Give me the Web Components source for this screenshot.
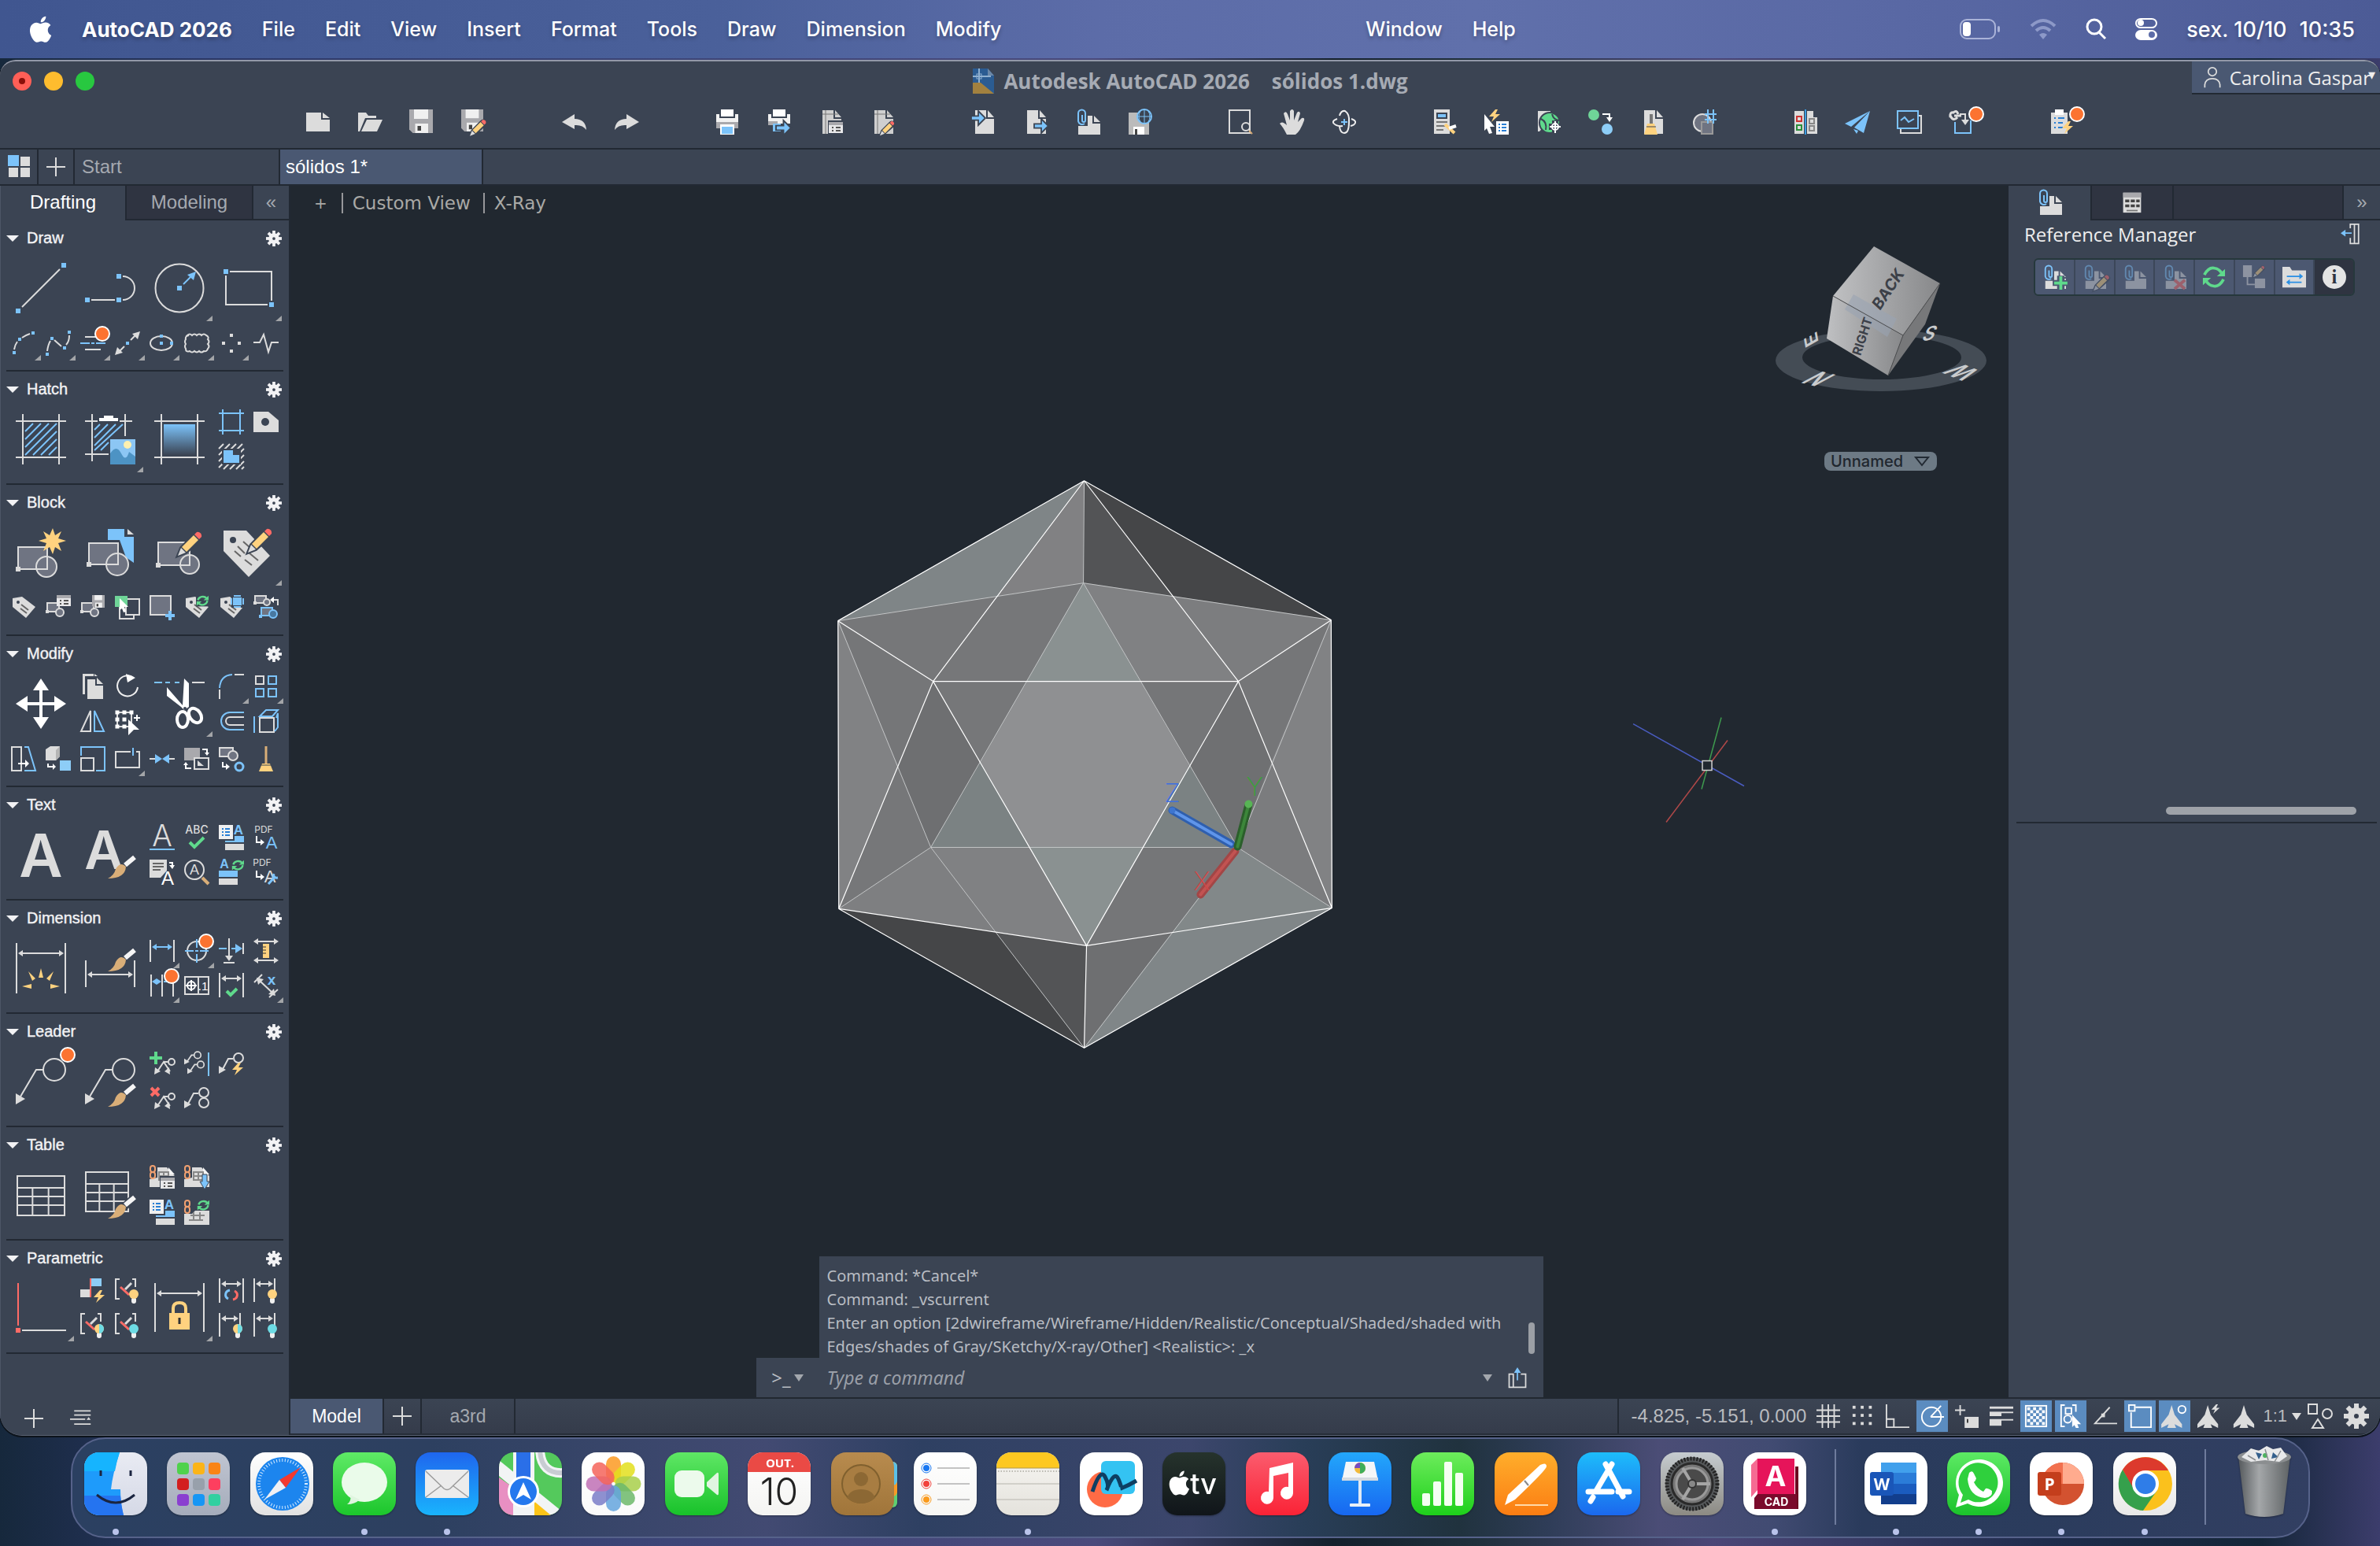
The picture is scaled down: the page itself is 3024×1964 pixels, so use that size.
<!DOCTYPE html>
<html lang="pt">
<head>
<meta charset="utf-8">
<title>Autodesk AutoCAD 2026</title>
<style>
html,body{margin:0;height:100%}
body{
  --panel:#3b4453;--line:#222933;--canvas:#212830;--tab:#2f3441;--active:#4a5872;--ink:#f2f2f4;--dim:#a5a9b0;
  display:flex;flex-direction:column;overflow:hidden;color:var(--ink);
  font-family:"Liberation Sans",Arial,sans-serif;
  background:linear-gradient(90deg,#16283c 0,#2b3766 9%,#3d4577 28%,#4a4a7c 46%,#14202c 56%,#20303c 62%,#4b4677 72%,#1f2c4c 86%,#142638 95%,#3c3d6c 100%)}
cad-window{flex:1;min-height:0;margin:2px 0}
</style>
</head>
<body>
<mac-menubar></mac-menubar>
<cad-window>
  <cad-titlebar slot="head"></cad-titlebar>
  <cad-toolbar slot="head"></cad-toolbar>
  <cad-doctabs slot="head"></cad-doctabs>
  <cad-tools slot="left"></cad-tools>
  <cad-viewport slot="center"></cad-viewport>
  <cad-references slot="right"></cad-references>
  <cad-status slot="foot"></cad-status>
</cad-window>
<mac-dock></mac-dock>
<script>
const W='#dcdcdc',B='#7cc3fa',Y='#ffd27f',G='#5fd98c',R='#ff6b66',F='#6f7482',P='#3b4453',T='#d9ae78',N='none';
const s=(d,c=W,w=2,x='')=>`<path d="${d}" fill="none" stroke="${c}" stroke-width="${w}" ${x}/>`;
const f=(d,c=W,x='')=>`<path d="${d}" fill="${c}" ${x}/>`;
const q=(x,y,c=B,n=6)=>`<rect x="${x-n/2}" y="${y-n/2}" width="${n}" height="${n}" fill="${c}"/>`;
const o=(x,y,r,fl=N,st=W,w=2)=>`<circle cx="${x}" cy="${y}" r="${r}" fill="${fl}" stroke="${st}" stroke-width="${w}"/>`;
const r=(x,y,w,h,fl=W,st=N,sw=2,rx=0)=>`<rect x="${x}" y="${y}" width="${w}" height="${h}" fill="${fl}" stroke="${st}" stroke-width="${sw}" rx="${rx}"/>`;
const g=(t,i)=>`<g transform="${t}">${i}</g>`;
const t=(x,y,n,str,c=W,x2='')=>`<text x="${x}" y="${y}" font-size="${n}" fill="${c}" text-anchor="middle" ${x2}>${str}</text>`;
const pencil=f('M0 32L4 22L20 6L22 4A5 5 0 0 1 29 11L10 28Z',P,`stroke="${P}" stroke-width="4"`)+f('M0 32L4 22L10 28Z')+f('M5 21L20 6L26 12L11 27Z',Y)+f('M21 5L24 2A5 5 0 0 1 30 8L27 11Z',R);
const brush=s('M22 14L34 3',P,10)+f('M0 30Q8 26 10 18Q16 8 23 15Q22 30 0 30Z',T)+s('M22 13L34 3','#f5f5f5',6);
const page=(c=W)=>f('M5 1H19V12H29V31H5Z',c)+f('M21 1L29 10H21Z',c);
const clip=s('M9 7V14A2 2 0 0 0 13 14V5A4 4 0 0 0 4 5V15A5 5 0 0 0 12 18',B,2);
const refpage=f('M4 21H16V8H22V18H32V32H4Z')+f('M24 8L32 16H24Z');
const lbl=(n=0)=>r(0,0,18,14,'#e8e8ea')+r(0,0,18,4,'#a9a9ad')+s('M4 7H6M9 7H15M4 11H6M9 11H15','#555',2);
const bolt=(c=Y)=>f('M8 0L0 9H6L3 16L14 6H8L11 0Z',c);
const sync=s('M3 8A8 7 0 0 1 17 5M18 9A8 7 0 0 1 4 13',G,3)+f('M20 1V8H12Z',G)+f('M1 17V10H9Z',G);
const floppy=f('M0 0H20V20H3L0 17Z','#a9a9ad')+r(4,0,12,8,'#f0f0f0')+r(5,12,11,8,'#f0f0f0')+r(7,14,3,4,'#444');
const dimh=(x1,x2,y,c=W)=>s(`M${x1+4} ${y}H${x2-4}`,c)+f(`M${x1} ${y}l6 -4v8zM${x2} ${y}l-6 -4v8z`,c);
const blk=(x,y)=>g(`translate(${x} ${y})`,r(2,1,15,11,F,W)+q(2,12,W,4)+o(18,13,5,F));
const leader=(x,y)=>g(`translate(${x} ${y})`,s('M4 17L11 7H15')+o(20,7,5)+f('M0 21V12L8 17Z'));
const multil=g('translate(6 9)',s('M4 16L12 4L20 16M12 4H17')+o(22,4,4)+f('M0 20L1 11L8 16ZM20 20L13 16L19 11Z'));
const bulb=(c,c2)=>r(21,24,6,8,'#f0f0f0','none',0,3)+o(24,20,6,c,'none',0)+(c2?f('M24 14A6 6 0 0 1 24 26Z',c2):'');
const brk=s('M6 1H1V26H6M22 1H26V11')+s('M7 11L18 21',R,3)+s('M13 14L21 6',W,3);
const dimb=s('M1 0V30M27 0V18')+dimh(3,25,7);
const sheet=f('M0 18V28H32V14L22 3H10V16Z')+f('M24 3L32 12H24Z','#f5f5f5')+r(12,9,12,10,N,'#888',2)+s('M12 14H24M18 9V19','#888');
const chain=`<rect x="1" y="1" width="6" height="8" rx="3" fill="${P}" stroke="#f0a070" stroke-width="2"/><rect x="1" y="9" width="6" height="8" rx="3" fill="${P}" stroke="#f0a070" stroke-width="2"/>`;
const arrowA=(x,y)=>g(`translate(${x} ${y})`,f('M14 0L18 13L28 26V31L18 26L20 31H8L10 26L0 31V26L10 13Z'));
const cube=r(8,12,18,18,N,W)+s('M8 10L16 2H31L24 10ZM29 12L31 6V24L27 29',B)+s('M1 10V31',B);
const tagp='M2 4L14 2L31 15L19 29L2 15Z';
const tag=f(tagp)+o(9,9,2,P,N,0)+s('M13 12L22 19M12 17L20 23','#666');
const gearp=()=>{let d='';for(let i=0;i<8;i++){d+=`<rect x="13" y="0" width="6" height="9" fill="currentColor" transform="rotate(${i*45} 16 16)"/>`}return d+'<circle cx="16" cy="16" r="7" fill="none" stroke="currentColor" stroke-width="8"/>'};
const frame=(a,b,c=W)=>s(`M0 ${a}H64M0 ${b}H64M${a} 0V64M${b} 0V64`,c,2);
const grid=(n,m)=>s(`M1 8H${n}V${m}H1ZM1 23H${n}M1 34H${n}M1 45H${n}M${n/3} 23V${m}M${n*2/3} 23V${m}`);
const printer=r(8,0,16,9,'#fff')+f('M2 6H6V11H26V6H30V24H2Z','#f2f2f2')+r(2,16,28,8,'#a9a9ad')+r(7,19,18,13,'#fff')+r(9,22,14,9,B);
const bl=(x,y,n=1)=>g(`translate(${x} ${y}) scale(${n})`,f('M0 7H10V0L20 10L10 20V13H0Z',B,`stroke="${P}" stroke-width="2"`));
const I={
 line:[64,s('M8 56L56 8')+q(3,61)+q(61,3)],
 pline:[64,s('M8 47H38M48 47A15 15 0 0 0 48 17')+q(3,47)+q(43,47)+q(43,17)],
 circle:[64,o(32,32,30.5)+q(32,32)+s('M37 27L46 18',B)+f('M53 11L50 22L42 15Z',B)],
 rect:[64,s('M8 11H61V48M56 53H3V16')+q(3,11)+q(61,53)],
 arc:[32,s('M4 24Q5 18 8 14M14 9Q18 6 24 4')+q(4,28,B,4)+q(11,11,B,4)+q(28,3,B,4)],
 spline:[32,s('M2 26Q3 18 6 13M11 12L20 20M26 18Q30 14 30 6')+q(2,30,B,4)+q(8,10,B,4)+q(24,22,B,4)+q(30,2,B,4)],
 ltype:[32,s('M6 8H20M6 24H26')+s('M0 16H12M14 16H18M20 16H32',B)],
 ray:[32,s('M6 26L12 20M20 12L26 6')+q(16,16,B,4)+f('M0 31L3 21L10 28ZM32 1L29 11L22 4Z')],
 ellipse:[32,`<ellipse cx="15" cy="16" rx="14" ry="9" fill="none" stroke="${W}" stroke-width="2"/>`+q(15,16,B,4)+q(15,7,B,4)+q(28,16,B,4)],
 cloud:[32,s('M4 6q3-3 6 0q3-3 6 0q3-3 6 0q3-3 6 0q4 2 2 5q3 3 0 6q3 3 0 6q-1 4-5 3q-3 3-6 0q-3 3-6 0q-3 3-6 0q-5 2-5-3q-2-3 0-6q-2-3 0-6q-1-4 4-5z')],
 points:[32,q(16,6,W,4)+q(6,16,W,4)+q(26,16,W,4)+q(16,26,W,4)],
 brk:[32,s('M0 15H8L13 5L19 27L23 15H32')],
 hatch:[64,frame(9,55)+s('M12 22L22 12M12 32L32 12M12 42L42 12M12 52L52 12M22 52L52 22M32 52L52 32M42 52L52 42',B)],
 hpaste:[64,s('M0 9H16M44 9H60M9 0V60M51 0V28M0 51H30')+f('M18 9V5H24V2H36V5H42V9Z','#fff')+s('M12 20L19 13M12 30L29 13M12 40L39 13M12 46L48 13M20 46L30 36',B)+r(32,32,32,32,'#8cc6f4')+o(54,39,5,'#fdf0b0',N,0)+f('M32 50Q40 38 46 50T56 48L64 54V64H32Z','#4d93c4')],
 grad:[64,`<defs><linearGradient id="gg" x2="0" y2="1"><stop stop-color="#7cc3fa"/><stop offset="1" stop-color="#3b4453"/></linearGradient></defs>`+frame(9,55)+r(12,13,40,39,'url(#gg)')],
 bound:[32,s('M0 5H32M0 27H32M5 0V32M27 0V32',B)],
 wipe:[32,f('M0 3H19L32 14V29H0Z')+o(15,16,5,P,N,0)],
 region:[32,s('M0 6L6 0M0 14L14 0M0 22L22 0M0 30L30 0M6 32L32 6M14 32L32 14M22 32L32 22M29 32L32 29')+r(4,6,24,20,P)+f('M6 8H18V14H26V24H6Z',B)],
 bcreate:[64,r(3,25,37,28,F,W)+q(3,53,W)+o(39,50,13,F)+s('M26 53H40V38')+f('M47 1L50 10L58 5L54 14L64 17L54 20L58 30L50 25L47 34L43 25L35 30L39 20L29 17L39 14L35 5L43 10Z',Y)],
 binsert:[64,f('M29 2H50V12H62V45L52 38L44 16H29Z',B)+f('M54 2L62 9H54Z',W)+r(5,20,37,27,F,W)+q(5,47,W)+o(41,47,14,F)+s('M28 47H42V34')],
 bedit:[64,r(5,19,40,29,F,W)+q(5,48,W)+o(45,47,12,F)+s('M34 48H45V36')+g('translate(30 4)',pencil)],
 attr:[64,f('M0 4H29L59 36L32 63L0 30Z')+o(12,16,4,P,N,0)+s('M25 18L34 26M18 24L27 33M32 32L44 42M14 30L22 37M27 41L36 48','#666')+g('translate(31 0)',pencil)],
 tag:[32,tag],
 bprop:[32,blk(0,9)+g('translate(14 0)',lbl())],
 bsave:[32,blk(0,9)+g('translate(15 0) scale(.8)',floppy)],
 brepl:[32,r(6,10,18,20,P,W)+r(14,5,17,20,P,W)+r(0,1,16,14,'#6fd598')+f('M6 4L17 15H12L14 21L11 22L9 17L6 19Z','#fff')],
 badd:[32,r(1,1,26,24,F,W)+s('M20 26H32M26 20V32',B,4)],
 tsync:[32,tag+g('translate(15 0) scale(.8)',r(0,0,20,18,P)+sync)],
 tblk:[32,tag+r(16,1,16,15,P)+r(18,3,11,10,B)+s('M16 4V12M31 4V12M19 1H28M19 15H28',B)],
 bconv:[32,r(2,1,14,9,F,W)+q(2,10,W,4)+o(17,9,4,F)+s('M24 6H31V13')+f('M21 6L26 2V10Z','#fff')+r(10,16,14,10,F,B)+o(25,24,5,'#4878a0',B)+q(9,27,B,4)],
 move:[64,f('M32 0L42 15H34V30H49V22L64 32L49 42V34H34V49H42L32 64L22 49H30V34H15V42L0 32L15 22V30H30V15H22Z','#fff')],
 copy:[32,f('M3 0H17V3H6V26H3Z')+f('M9 7H19V15H29V32H9Z')+f('M21 5L29 13H21ZM18 0L22 3H18Z')],
 rot:[32,s('M24 5A13 13 0 1 0 29 17','#f0f0f0')+f('M14 0L26 5L16 11Z','#fff')],
 mirror:[32,s('M13 3V29H1Z')+s('M18 3V29H30Z',B)],
 stretch:[32,r(3,5,18,18,N,W)+[[3,5],[12,5],[21,5],[3,14],[12,14],[3,23],[12,23]].map(a=>q(a[0],a[1],'#fff',5)).join('')+f('M17 14L31 27H24L17 34Z','#fff')+s('M24 12H32M28 8V16','#fff')],
 trim:[64,s('M0 5H10M14 5H20M26 5H32',B)+s('M48 5H64',W)+f('M38 0L44 6V36L38 40L34 36L16 22V11L36 34Z','#fff')+`<ellipse cx="36" cy="52" rx="7" ry="10" fill="none" stroke="#fff" stroke-width="4"/><ellipse cx="52" cy="47" rx="7" ry="10" transform="rotate(-35 52 47)" fill="none" stroke="#fff" stroke-width="4"/>`+o(39,38,2,P,N,0)],
 fillet:[32,s('M1 18Q2 2 17 1',B)+s('M20 1H32M1 20V32')],
 array:[32,r(3,3,10,10,N,W)+r(19,3,10,10,N,B)+r(3,19,10,10,N,B)+r(19,19,10,10,N,B)],
 offset:[32,s('M32 5H14A11 11 0 0 0 14 27H32',B)+s('M32 11H14A5 5 0 0 0 14 21H32')],
 cube:[32,cube],
 sdraft:[32,s('M1 1H13V31H1Z')+s('M17 1H22L31 31H17',B)+s('M9 22H20','#fff')+f('M18 17L23 22L18 27Z','#fff')],
 b3d:[32,f('M0 4L6 0H18V13L13 18H0Z')+f('M13 5L18 0V13L13 18Z','#b5b5b5')+r(18,18,14,13,'#8dcdf7')+s('M3 22V26H10','#fff')+f('M9 22L13 26L9 30Z','#fff')],
 scale:[32,s('M1 12V1H31V31H20',B)+r(1,15,16,16,N,W)],
 brkat:[32,s('M20 7H1V27H31V7H27')+s('M23 2V12',B)],
 join:[32,s('M0 16H8M24 16H32')+f('M7 10L16 16L7 22ZM25 10L16 16L25 22Z',B)],
 order:[32,f('M0 2H20V14H12V18H0Z','#a9a9ad')+r(13,15,18,14,N,W)+f('M17 18L25 25H17Z')+s('M23 4H29V9M9 28H2V23','#fff')+f('M26 8H32L29 12ZM-1 24H5L2 20Z','#fff')],
 bexp:[32,r(1,2,17,11,F,W)+o(18,12,6,F)+o(26,26,5,N,B,3)+s('M5 20V26H10','#fff')+f('M9 22L14 26L9 30Z','#fff')],
 purge:[32,s('M16 0V22',T,3)+f('M11 22H21L25 32H7Z',Y)+s('M10 24H22',P,1)],
 mtext:[64,t(32,60,76,'A',W,'font-weight="600" font-family="Inter"')],
 tstyle:[64,t(24,50,68,'A',W,'font-weight="600" font-family="Inter"')+g('translate(29 32)',brush)],
 stext:[32,t(16,27,38,'A',W,'font-family="Inter" font-weight="300"')+s('M0 31H32',B)],
 spell:[32,t(16,11,14,'ABC',W,'font-family="Inter" font-weight="500"')+s('M7 22L13 28L25 16',G,4)],
 tlist:[32,r(0,0,18,18,'#f0f0f0')+s('M4 5H6M8 5H14M4 9H6M8 9H14M4 13H6M8 13H14','#2a7fd4')+t(25,12,17,'A',B,'font-weight="700"')+f('M20 14H32V22H8V20H20Z',B)+r(8,24,24,8,W)],
 pdfa:[32,t(13,10,12,'PDF',W,'font-family="Inter"')+s('M4 14V22H10','#fff')+f('M9 18L14 22L9 26Z','#fff')+t(23,30,22,'A',B)],
 conv:[32,f('M0 0H22V14L14 23H0Z')+s('M4 5H18M4 9H18M4 13H14','#666')+s('M25 4H29V9','#fff')+f('M25 7H32L29 12Z','#fff')+t(23,32,24,'A','#fff')],
 find:[32,o(13,13,12)+t(13,19,18,'A')+s('M23 23L31 31',T,4)],
 tupd:[32,t(7,11,16,'A',B,'font-weight="700"')+r(0,14,24,8,B)+r(0,24,24,8,W)+g('translate(16 0) scale(.8)',sync)],
 pdfw:[32,t(11,8,12,'PDF',W,'font-family="Inter"')+s('M4 14V22H10','#fff')+f('M9 18L14 22L9 26Z','#fff')+t(21,29,22,'A')+s('M19 31L28 21M26 18Q24 24 31 23',B,3)],
 dim:[64,s('M1 0V64M63 0V64')+dimh(3,61,13)+f('M32 32L35 44H29ZM16 36L25 45L21 48ZM48 36L39 45L43 48ZM8 55L20 52V58ZM56 55L44 52V58Z',Y)],
 dstyle:[64,s('M1 22V56M63 22V56')+dimh(3,61,40)+g('translate(29 6)',brush)],
 dlin:[32,s('M1 2V30M31 2V30')+dimh(3,29,11,B)],
 center:[32,o(16,16,12)+s('M1 16H12M20 16H31M16 1V12M16 20V31M14 16H18',B)],
 dord:[32,s('M13 0V24M6 31H20M31 6V20')+f('M8 22H18L13 29Z')+s('M0 13H10M16 13H22',B)+f('M21 7L30 13L21 19Z',B)],
 dist:[32,dimh(0,32,4)+dimh(0,32,28)+r(12,7,8,18,Y)+s('M12 11H16M12 15H16M12 19H16','#333',1)],
 dcont:[32,s('M2 2V30M16 2V30M30 12V30')+dimh(3,15,11,B)+s('M18 11H22',B)],
 tol:[32,r(1,5,30,22,N,W)+s('M18 5V27')+o(9,16,5,N,'#fff')+s('M2 16H16M9 9V23','#fff')+t(24,22,15,'.1','#fff')],
 dchk:[32,s('M1 0V31M31 0V31')+dimh(3,29,7)+s('M10 23L15 28L23 20',G,4)],
 dobl:[32,s('M1 12L11 2M20 31L31 21M7 9L25 26')+f('M4 6L13 8L6 15ZM28 29L19 27L26 20Z')+t(23,15,19,'x',B,'font-weight="700"')],
 mlead:[64,o(49,17,14)+s('M35 17H26L6 51')+f('M0 47L12 54L0 61Z')],
 mlstyle:[64,o(49,17,14)+s('M35 17H26L6 51')+f('M0 47L12 54L0 61Z')+g('translate(29 34)',brush)],
 ladd:[32,multil+s('M0 8H16M8 0V16',G,4)],
 lalign:[32,g('translate(0 1) scale(.85)',leader(0,-3))+g('translate(4 13) scale(.85)',leader(0,-3))+s('M31 1V31',B)],
 lauto:[32,s('M4 24L12 9H18')+o(25,8,6)+f('M0 28V18L9 23Z')+g('translate(17 14)',bolt())],
 lrem:[32,multil+s('M2 2L12 12M12 2L2 12',R,4)],
 lcol:[32,o(25,8,6)+o(25,21,6)+s('M4 24L12 9H18')+f('M0 28V18L9 23Z')],
 table:[64,g('translate(1 0)',grid(61,58))],
 tbstyle:[64,g('translate(0 -5)',grid(55,58))+g('translate(29 32)',brush)],
 s1:[32,sheet+chain+r(13,14,19,17,P)+g('translate(14 16)',lbl())],
 s2:[32,sheet+chain+f('M23 12H29V21H32L26 31L20 21H23Z',B,`stroke="${P}"`)],
 s4:[32,f('M0 18H10L14 14H32V32H0Z')+s('M8 20H26M6 26H24M12 16V26M20 16V26','#888')+chain+r(15,0,17,14,P)+g('translate(16 0) scale(.8)',sync)],
 perp:[64,s('M3 0V54',R)+s('M8 60H64')+q(3,60,R)],
 flag:[32,r(14,0,13,10,'#8dcdf7')+r(0,14,12,10,W)+s('M13 0V24',R)+g('translate(17 15)',bolt())],
 k1:[32,brk+bulb(Y)],k2:[32,brk+bulb(Y,'#6ddbe4')],k3:[32,brk+bulb('#6ddbe4')],
 lock:[64,s('M1 0V62M63 0V62')+dimh(3,61,13)+s('M24 38V32Q24 25 32 25T40 32V38',Y,4)+r(19,38,26,21,Y)+r(30.5,44,3,8,'#333')],
 dsync:[32,s('M1 0V31M31 0V31')+dimh(3,29,7)+s('M14 15A7 6 0 0 0 12 26',B,3)+s('M18 27A7 6 0 0 0 20 16',R,3)],
 d1:[32,dimb+bulb(Y)],d2:[32,dimb+bulb(Y,'#6ddbe4')],d3:[32,dimb+bulb('#6ddbe4')],
 gear:[32,gearp()],
 newf:[32,f('M1 4H20V13H31V28H1Z')+f('M22 4L31 11H22Z')],
 open:[32,f('M1 28V4H11L14 8H24V11H10L3 28Z')+f('M12 13H32L25 28H5Z')],
 save:[32,g('scale(1.5)',floppy)],
 saveas:[32,g('scale(1.4)',floppy)+g('translate(11 12) scale(.68)',pencil)],
 undo:[32,f('M0 16L16 6V12Q30 12 31 26Q26 19 16 20V25Z')],
 redo:[32,f('M32 16L16 6V12Q2 12 1 26Q6 19 16 20V25Z')],
 print:[32,printer],
 print2:[32,r(8,0,16,9,'#fff')+f('M2 6H6V11H26V6H30V18H2Z','#f2f2f2')+r(2,15,12,5,'#a9a9ad')+r(8,18,10,10,B)+bl(12,14,.95)],
 psetup:[32,page('#cfcfcf')+s('M9 1V31M5 6H25','#777',1)+r(12,14,20,17,P)+g('translate(13 16)',lbl())],
 pedit:[32,page('#cfcfcf')+s('M9 1V31M5 6H25','#777',1)+g('translate(12 14) scale(.6)',pencil)],
 imp:[32,page()+bl(0,2,.9)],exp:[32,page()+bl(14,12,.9)],
 att:[32,refpage+clip],
 webs:[32,f('M2 4H16V16H28V32H2Z','#bbb')+r(8,22,14,10,'#fff')+r(10,25,3,7,'#444')+o(22,9,9,P,B)+s('M13 9H31M22 0V18M17 2Q13 9 17 16M27 2Q31 9 27 16',B,1)],
 zoomw:[32,r(2,1,26,29,N,W)+o(23,22,5,P)+s('M27 27L31 31',T,2)],
 pan:[32,f('M9 32Q4 22 0 18Q3 14 9 20L5 5Q8 1 10 6L13 14V2Q16-2 18 2V14L22 4Q25 1 26 5L23 16L28 11Q32 10 31 14Q26 28 20 32Z')],
 orbit:[32,s('M10 8Q12 1 17 2Q23 6 22 16Q22 30 16 30Q11 30 10 22M7 12Q1 14 2 17Q6 22 14 21M25 12Q31 14 30 17Q29 20 24 21','#eee')+s('M12 16H20M16 12V20',B)],
 props:[32,r(2,0,20,31)+r(5,4,14,8,P)+r(7,6,10,4,B)+s('M5 16H19M5 21H19M5 26H14','#777')+s('M16 19L28 30',Y,4)+s('M21 24L30 21','#fff',4)],
 qsel:[32,f('M0 6L13 22H7L10 30L6 31L3 24L0 27Z','#fff')+g('translate(6 0)',bolt())+r(15,15,16,17,'#fff')+s('M18 19H20M22 19H28M18 23H20M22 23H28M18 27H20M22 27H28','#2a7fd4')],
 geo:[32,f('M2 2H18V12L4 28H2Z')+o(17,17,13,G,P)+s('M6 12Q14 16 12 26M20 6Q22 14 30 14',P)+f('M20 14H28V18H32V26H28V31H20V26H16V18H20Z',P)+s('M17 22H31M24 15V30M20 22a4 4 0 1 0 8 0a4 4 0 1 0-8 0','#fff')],
 swap:[32,o(7,7,7,'#6fd598',N,0)+o(24,25,7,'#8dcdf7',N,0)+s('M18 6H27V12','#fff')+f('M23 10H31L27 16Z','#fff')],
 clean:[32,page()+s('M14 6V18','#777',4)+f('M9 18H18L22 32H5Z',Y)+s('M8 22H20',P,1)],
 count:[32,o(13,17,11,F)+r(12,16,14,15,F,'#999')+s('M20 0V18M27 0V18M16 6H31M16 13H31',B)],
 comp:[32,f('M2 2H14V31H2ZM18 2H26V10H31V31H18Z')+s('M16 0V32','#3a9be0')+r(5,9,6,6,N,'#c33')+r(5,20,6,6,N,'#2a8f3a')+r(21,12,6,6,N,'#888')+r(21,21,6,6,N,'#888')],
 plane:[32,f('M32 2L0 18L8 22ZM32 2L12 23L24 30ZM11 25L15 31L17 27Z',B)],
 feed:[32,r(5,8,26,22,N,W)+r(1,2,26,22,P,B)+s('M5 14L10 10L15 16L22 12',B)],
 trace:[32,s('M8 16V30H28V14',B)+s('M2 10Q1 3 6 4Q10 0 12 6M2 8Q6 16 11 10M7 8L16 8','#ddd',3)+s('M14 6H21V14')+f('M16 13H26L21 20Z')],
 macro:[32,r(2,4,21,27)+r(7,0,11,7,'#fff')+s('M6 11H8M11 11H19M6 17H8M11 17H17M6 23H8M11 23H17','#2a7fd4')+g('translate(16 15)',bolt())],
 lay:[32,r(2,1,14,14,B)+r(18,3,12,12,W)+r(3,17,12,12,W)+r(18,17,12,12,W)],
 tbl2:[32,r(3,2,26,29)+r(3,2,26,7,'#a9a9ad')+s('M6 14H12M14 14H20M22 14H27M6 21H12M14 21H20M22 21H27','#444',4)+s('M8 28H24','#777')],
 undock:[32,s('M14 8V2H26V30H14V22M20 2V30')+s('M4 15H16',B)+f('M0 15L7 10V20Z',B)],
 atta:[32,refpage+clip+f('M20 14H30V20H34V28H30V34H20V28H14V20H20Z','#4c5871')+s('M16 24H34M25 15V33',G,4)],
 atte:[32,refpage+clip+g('translate(15 12) scale(.7)',pencil)],
 attc:[32,refpage+clip],
 attd:[32,refpage+clip+s('M16 20L30 32M30 20L16 32',R,4)],
 refr:[32,s('M3 13Q9 2 17 4Q23 5 26 10M29 19Q23 30 15 28Q9 27 6 22',G,4)+f('M31 5V15H20ZM1 27V17H12Z',G)],
 tree:[32,r(1,0,12,16)+r(17,18,14,13)+s('M7 16V26H17')+g('translate(15 0) scale(.5)',pencil)],
 pathf:[32,f('M0 2H10L13 7H32V30H0Z')+s('M6 15H24M8 23H26','#2a8fe4')+f('M23 11L28 15L23 19ZM10 19L5 23L10 27Z','#2a8fe4')],
 info:[32,o(16,16,16,'#e4e4e4',N,0)+t(16,25,26,'i','#2f3441','font-family="Liberation Serif" font-weight="700"')],
 gridm:[32,s('M0 8H32M0 16H32M0 24H32M8 0V32M16 0V32M24 0V32')],
 snap:[32,[4,15,26].map(y=>[4,15,26].map(x=>q(x,y,W,4)).join('')).join('')],
 ortho:[32,s('M1 0V31H32M1 20H11V31')],
 polar:[32,o(15,17,13,N,'#fff')+s('M14 17H32M14 17L28 2','#fff')],
 dyn:[32,s('M0 8H14M7 1V15')+r(13,17,19,15)+s('M17 20V25','#333')],
 lw:[32,r(0,3,32,3)+r(0,10,16,6)+r(16,10,16,2)+r(0,20,16,9)+r(16,20,16,2)],
 transp:[32,r(2,2,28,28,N,'#fff')+[0,1,2,3,4,5].map(i=>[0,1,2,3,4,5].map(j=>(i+j)%2?'':q(6+i*4,6+j*4,'#fff',4)).join('')).join('')],
 cyc:[32,s('M8 1H3V30H8M18 1H23V10','#fff')+r(9,5,8,8,N,'#fff')+o(12,20,5,N,'#fff')+f('M18 14L30 27H25L27 32L23 32L21 28L18 31Z','#fff')],
 ang:[32,s('M22 4L2 26H32')+q(13,15,W,5)],
 ucs:[32,s('M10 4H31V31H4V11','#fff')+r(1,1,8,8,N,'#fff')],
 an1:[32,g('translate(-2 1)',arrowA(0,0))+o(26,7,5,'#5b8cc0','#fff')],
 an2:[32,arrowA(0,1)+g('translate(19 0) scale(.8)',bolt(W))],
 an3:[32,arrowA(2,1)],
 iso:[32,r(1,1,11,12,N,W)+o(25,13,6)+s('M13 20L20 31H6Z')],
 user:[32,o(16,8,6)+s('M5 31V27Q6 18 16 18T27 27V31')],
 plus:[32,s('M4 16H28M16 4V28')],
 listm:[32,s('M6 5H30M6 11H30M0 17H22M6 24H30')+f('M24 18L27 14L30 18Z')],
 share:[32,s('M11 11H4V30H28V11H21M10 11V30')+s('M16 20V8',B)+f('M11 9L16 1L21 9Z',B)],
 dwg:[32,f('M1 0H20L28 9V32H1Z','#2b5c92')+f('M1 18H11L28 32H1Z','#a2813f')+s('M1 10H24M9 0V18','#8fb0d0',2)+r(6,7,6,6,N,'#8fb0d0',1)+f('M20 0L28 9H20Z','#6b88a8')]
};
const def=(name,css,html)=>customElements.define(name,class extends HTMLElement{
  constructor(){super();this.attachShadow({mode:'open'})}
  connectedCallback(){
    const h=typeof html==='function'?html(this):html;
    this.shadowRoot.innerHTML=`<style>:host,*{box-sizing:border-box}button{all:unset;box-sizing:border-box;display:flex;align-items:center;justify-content:center}svg{display:block;overflow:visible}${css}</style>${h}`;
  }
});
def('ui-icon',':host{display:block;flex:none}svg{width:var(--size,32px);height:var(--size,32px)}',e=>{
  const [n,b]=I[e.getAttribute('name')];return `<svg viewBox="0 0 ${n} ${n}" aria-hidden="true">${b}</svg>`});
const ic=(n,x='')=>`<ui-icon name="${n}" ${x}></ui-icon>`;
const badge='.badge{position:absolute;width:20px;height:20px;border-radius:50%;background:#fc7330;border:2px solid #fff}';

const apple=c=>`<path fill="${c}" d="M22.8 17.2c0-3.8 3.1-5.6 3.2-5.7-1.800-2.600-4.500-2.900-5.500-3-2.300-.2-4.500 1.400-5.700 1.400s-3-1.300-4.900-1.300c-2.500 0-4.800 1.500-6.100 3.700-2.600 4.500-.7 11.200 1.900 14.900 1.200 1.800 2.700 3.800 4.700 3.700s2.600-1.200 4.900-1.200 2.900 1.200 4.900 1.200 3.300-1.800 4.500-3.600c1.400-2.100 2-4.100 2-4.200-.1 0-3.900-1.500-3.900-5.900zM19.100 6.200c1-1.300 1.700-3 1.500-4.700-1.500.1-3.300 1-4.300 2.200-.9 1.100-1.800 2.900-1.500 4.600 1.600.1 3.300-.8 4.300-2.100z"/>`;
def('mac-menubar',`:host{display:flex;align-items:center;flex:none;height:74px;padding-right:32px;background:linear-gradient(90deg,#405690,#4a609a 30%,#5c6ca8 46%,#6070ab 62%,#5968a4 80%,#4c5b96);font:500 25px Inter,sans-serif;color:#fff;text-shadow:0 3px 5px #0004}
nav{display:flex;align-items:center;gap:38px;padding-left:36px;flex:0 0 58%}nav.r{flex:1;padding:0}b{font-weight:700;font-size:26px}
svg.a{width:32px;height:36px;margin-right:-2px}button{font:inherit;color:inherit;white-space:nowrap}.s{display:flex;align-items:center;gap:37px}.c{display:flex;gap:16px;font-size:27px}`,
`<nav><svg class="a" viewBox="2 0 26 32">${apple('#fff')}</svg><button><b>AutoCAD 2026</b></button>${['File','Edit','View','Insert','Format','Tools','Draw','Dimension','Modify'].map(x=>`<button>${x}</button>`).join('')}</nav>
<nav class="r"><button>Window</button><button>Help</button></nav>
<div class="s"><svg width="52" height="26" viewBox="0 0 52 26">${r(1,1,44,24,N,'#aab3d8',2,8)+r(4,4,10,18,'#fff',N,0,4)+r(48,9,3,8,'#aab3d8',N,0,2)}</svg>
<svg width="34" height="28" viewBox="0 0 34 28">${s('M2 10Q17-4 32 10M8 16Q17 8 26 16','#8d99c8',4)+f('M17 27L12 21Q17 17 22 21Z','#8d99c8')}</svg>
<svg width="26" height="28" viewBox="0 0 26 28">${o(11,11,9,N,'#fff',3)+s('M17 18L25 26','#fff',3)}</svg>
<svg width="28" height="28" viewBox="0 0 28 28">${r(1,1,26,11,N,'#fff',2,6)+o(7,6,4,'#fff',N,0)+r(0,15,28,13,'#fff',N,0,7)+o(21,21,4,'#5c6ca8',N,0)}</svg>
<div class="c"><span>sex. 10/10</span><span>10:35</span></div></div>`);

def('cad-window',`:host{display:flex;flex-direction:column;background:var(--panel);border-top:2px solid #9298a8;border-radius:20px 20px 28px 28px;overflow:hidden;box-shadow:0 1px 0 1px #0c131b;border-bottom:1px solid #5a6272}
main{flex:1;display:flex;min-height:0;position:relative}.m{flex:1;min-width:0;display:flex;flex-direction:column}.u{flex:1;display:flex;min-height:0}`,
`<slot name="head"></slot><main><slot name="left"></slot><div class="m"><div class="u"><slot name="center"></slot><slot name="right"></slot></div><slot name="foot"></slot></div></main>`);

def('cad-titlebar',`:host{display:flex;align-items:center;height:50px;font:700 26px "Open Sans",sans-serif;color:#a6abb4}
i{width:24px;height:24px;border-radius:50%;margin-left:16px}.l,.r{flex:1 0 0;display:flex;align-items:center}.d{display:grid;place-items:center}.d:after{content:"";width:8px;height:8px;border-radius:50%;background:#8a0f0a}
.t{display:flex;gap:8px;align-items:center}.t span+span{margin-left:20px}.r{justify-content:flex-end;align-self:flex-start}
button{height:42px;padding:0 12px;gap:8px;background:var(--active);border-bottom:2px solid var(--line);font:400 24px "Open Sans",sans-serif;color:#eee;position:relative}
small{position:absolute;right:6px;top:4px;font-size:18px}`,
`<div class="l"><i class="d" style="background:#ff5f57"></i><i style="background:#febc2e"></i><i style="background:#28c840"></i></div><div class="t">${ic('dwg')}<span>Autodesk AutoCAD 2026</span><span>sólidos 1.dwg</span></div><div class="r"><button>${ic('user','style="--size:28px"')}<span>Carolina Gaspar</span><small>▾</small></button></div>`);

const groups=[['newf','open','save','saveas'],['undo','redo'],['print','print2','psetup','pedit'],['imp','exp','att','webs'],['zoomw','pan','orbit'],['props','qsel','geo','swap','clean','count'],['comp','plane','feed','trace*'],['macro*']];
def('cad-toolbar',`:host{display:flex;gap:62px;height:62px;padding:0 0 6px 371px;border-bottom:2px solid var(--line)}div{display:flex}button{width:66px;position:relative}${badge}.badge{right:4px;top:7px}`,
groups.map(a=>`<div>${a.map(n=>`<button aria-label="${n.replace('*','')}">${ic(n.replace('*',''))}${n.endsWith('*')?'<span class="badge"></span>':''}</button>`).join('')}</div>`).join(''));

def('cad-doctabs',`:host{display:flex;height:46px;border-bottom:2px solid var(--line);font-size:24px;color:var(--dim)}button{border-right:2px solid var(--line)}.s{width:49px}.p{width:46px}.t{justify-content:flex-start;padding-left:9px;width:261px}.on{width:258px;padding-left:7px;background:var(--active);color:#fff}`,
`<button class="s" aria-label="Layouts">${ic('lay')}</button><button class="p" aria-label="New">${ic('plus')}</button><button class="t">Start</button><button class="t on">sólidos 1*</button>`);

/* Tools: a leading capital L marks a large button, ^ a flyout corner, * a badge, _ an empty cell */
const secs=[
['Draw',[['Lline','Lpline','Lcircle^','Lrect^'],['arc^','spline^','ltype^*','ray^','ellipse^','cloud^','points^','brk']]],
['Hatch',[['Lhatch','Lhpaste^','Lgrad','bound','wipe','region']]],
['Block',[['Lbcreate','Lbinsert','Lbedit','Lattr^'],['tag','bprop','bsave','brepl','badd','tsync','tblk','bconv']]],
['Modify',[['Lmove','copy','rot','Ltrim^','fillet^','array^','mirror','stretch','offset','cube'],['sdraft','b3d','scale','brkat^','join','order','bexp','purge']]],
['Text',[['Lmtext','Ltstyle','stext','spell','tlist','pdfa','conv','find','tupd','pdfw']]],
['Dimension',[['Ldim','Ldstyle','dlin^','center^*','dord','dist','dcont^*','tol','dchk','dobl^']]],
['Leader',[['Lmlead*','Lmlstyle','ladd','lalign','lauto','_','lrem','lcol']]],
['Table',[['Ltable','Ltbstyle','s1','s2','_','_','tlist','s4']]],
['Parametric',[['Lperp^','flag','k1','Llock^','dsync','d1','k2','k3','d2','d3']]]];
def('tool-section',`:host{display:block;flex:none;width:352px;margin:0 7px;padding-bottom:12px;border-bottom:2px solid var(--line);font-size:20px}
header{display:flex;height:42px;padding-top:3px;align-items:center;gap:10px}header button{width:16px;height:16px}header button:first-child:before{content:"";border:8px solid transparent;border-top:8px solid #f2f2f4;border-bottom:0}h3{margin:0;flex:1;font:inherit;color:#f2f2f4;-webkit-text-stroke:.4px #f2f2f4}
header button:last-child{width:20px;margin-right:2px;color:#f2f2f4}
.g{display:grid;grid-template-columns:repeat(8,44px);grid-auto-rows:44px;grid-auto-flow:row}.g+.g{margin-top:4px}
.g button{position:relative}.L{grid-area:auto/auto/span 2/span 2;--size:64px}.f:after{content:"";position:absolute;right:0;bottom:0;border-left:8px solid transparent;border-bottom:7px solid #a3a5a8}.L.f:after{right:2px;bottom:2px}${badge}.badge{top:0;right:0}`,
e=>{const [n,rows]=secs.find(x=>x[0]===e.getAttribute('name'));
return `<header><button aria-label="Collapse ${n}"></button><h3>${n}</h3><button aria-label="${n} settings">${ic('gear','style="--size:20px"')}</button></header>`+rows.map(a=>`<div class="g">${a.map(x=>{if(x==='_')return'<span></span>';const L=x[0]==='L',k=x.replace(/^L|[\^*]/g,'');return `<button aria-label="${k}" class="${L?'L':''} ${x.includes('^')?'f':''}">${ic(k)}${x.includes('*')?'<span class="badge"></span>':''}</button>`}).join('')}</div>`).join('')});
def('cad-tools',`:host{display:flex;flex-direction:column;width:369px;flex:none;background:var(--panel);border-right:2px solid var(--line);border-left:1px solid #4c5666}
nav{display:flex;height:44px;font-size:24px;color:var(--dim)}nav button{flex:0 0 161px;background:var(--tab);border-left:2px solid var(--line);border-bottom:2px solid var(--line)}nav button.on{background:none;color:#fff;border-color:transparent;flex-basis:158px;border-left:0}nav .x{flex:1;background:none}
footer{margin-top:auto;display:flex;gap:30px;padding:0 26px 6px}footer button{height:30px}`,
`<nav><button class="on">Drafting</button><button>Modeling</button><button class="x" aria-label="Collapse">«</button></nav>${secs.map(x=>`<tool-section name="${x[0]}"></tool-section>`).join('')}<footer><button aria-label="Add">${ic('plus')}</button><button aria-label="List">${ic('listm','style="--size:28px"')}</button></footer>`);

const pt={T:[1377,611],a:[1064,789],b:[1691,788],c:[1065,1155],d:[1692,1154],Z:[1377,1332],l:[1185,866],r:[1573,866],u:[1380,1202],t:[1376,741],L:[1182,1077],R:[1572,1077],
1:[1267,758],2:[1490,758],3:[1304,866],4:[1449,866],5:[1245,969],6:[1511,973],7:[1140,974],8:[1615,968],9:[1307,1077],x:[1452,1077],y:[1265,1185],z:[1489,1185]};
const faces='Ta1:7f8587 T1t:818183 Tt2:535456 T2b:454648 a1l:767779 1t3l:767779 t43:8a9191 t2r4:808183 2br:7c7d7f al7:757678 ac7:818284 l7L5:6e6f71 l35:767779 346x95:8f9092 r46:757678 r6R8:6f7072 r8b:757678 b8d:818284 59L:7b8283 6xR:7b8283 9xu:8a9191 7Lc:767779 L9uy:808183 cLy:7e7f81 cyZ:454648 yuZ:535456 uzZ:6e6f71 zdZ:808688 Rxuz:757678 Rzd:828889 8Rd:7b7c7e';
const E=(l)=>l.split(' ').map(x=>`M${pt[x[0]]}L${pt[x[1]]}`).join('');
const bar=(x1,y1,x2,y2,a,b)=>`<path d="M${x1} ${y1}L${x2} ${y2}" stroke="${a}" stroke-width="10" stroke-linecap="round"/><path d="M${x1} ${y1}L${x2} ${y2}" stroke="${b}" stroke-width="4" stroke-linecap="round"/>`;
def('solid-model',':host{display:block;position:absolute;inset:0}svg{width:100%;height:100%}',
`<svg viewBox="368 236 2184 1542">${faces.split(' ').map(x=>{const[k,c]=x.split(':');return `<path d="M${[...k].map(i=>pt[i]).join('L')}Z" fill="#${c}" stroke="#${c}" stroke-width=".6"/>`}).join('')}
<path d="${E('tT ta tb tL tR LR aL bR cL dR LZ RZ')}" stroke="#c4c6c7" stroke-width="1" fill="none"/>
<path d="${E('Ta Tb ac bd cZ dZ Tl Tr al br lr lu ru lc rd uc ud uZ')}" stroke="#fff" stroke-width="1.2" fill="none"/>
${bar(1489,1030,1564,1073,'#2f5fae','#5f95ea')}${bar(1525,1137,1569,1082,'#a34646','#c25352')}${bar(1586,1023,1572,1076,'#2b5f2b','#3c863a')}${o(1586,1022,5,'#58b455',N,0)}${o(1489,1030,4,'#3e75cf',N,0)}
<g font-family="Inter" font-weight="200" font-size="33"><text x="1479" y="1020" fill="#3d6fe0">Z</text><text x="1583" y="1012" fill="#3aa03a">Y</text><text x="1516" y="1132" fill="#d04848">X</text></g>
${s('M2075 920L2216 999','#4a5cc0',1.5)+s('M2187 912L2162 1003','#3e9a4e',1.5)+s('M2195 941L2117 1045','#b04848',1.5)+r(2163,967,12,12,'#212830','#d0d0d0',1.5)}</svg>`);
def('view-cube',`:host{display:block;position:absolute;right:28px;top:70px;width:268px}svg{width:268px;height:192px}
select{all:unset;box-sizing:border-box;display:block;margin:76px 0 0 62px;width:143px;height:24px;border-radius:8px;background:#6d7a85;color:#1f262e;font:500 20px/24px Inter,sans-serif;padding-left:8px}
div{position:relative}div svg{position:absolute;left:176px;top:6px;width:20px;height:12px}`,
`<svg viewBox="2256 306 268 192"><defs><linearGradient id="v"><stop stop-color="#bfc0c2"/><stop offset="1" stop-color="#87888a"/></linearGradient></defs>
<path fill="#444c55" fill-rule="evenodd" d="M2256 458a134 39 0 0 1 268 0a134 39 0 0 1-268 0zM2290 454a101 28 0 0 0 202 0a101 28 0 0 0-202 0z"/>
<g font-family="Inter" font-weight="600" font-size="28" fill="#c9cbcd" text-anchor="middle"><text transform="translate(2309 482) rotate(14) skewX(-48)" y="9">N</text><text transform="translate(2301 432) rotate(-100) skewX(20)" y="9" font-size="24">E</text><text transform="translate(2452 424) rotate(-6) skewX(-30)" y="8" font-size="24">S</text><text transform="translate(2494 472) rotate(202) skewX(-42)" y="9">W</text></g>
<path d="M2381 313L2465 360L2418 426L2329 376Z" fill="url(#v)"/><path d="M2329 376L2418 426L2399 477L2321 430Z" fill="url(#v)"/><path d="M2465 360L2418 426L2399 477L2446 412Z" fill="#77787a"/>
<path d="M2355 374L2410 405L2398 428L2344 393Z" fill="#9aa3b2" opacity=".6"/><path d="M2329 376L2418 426L2465 360M2418 426L2399 477" fill="none" stroke="#4d4e50"/>
<g font-family="Inter" font-weight="700" fill="#3c4048" text-anchor="middle"><text transform="translate(2399 367) rotate(-56) skewX(-8)" y="7" font-size="20">BACK</text><text transform="translate(2366 427) rotate(-72)" y="6" font-size="16">RIGHT</text></g></svg>
<div><select aria-label="Coordinate system"><option>Unnamed</option></select><svg viewBox="0 0 20 12">${s('M2 1H18L10 11Z','#222a33',2)}</svg></div>`);
def('command-line',`:host{display:block;position:relative;align-self:center;width:1000px;font:400 20px/30px "Noto Sans",sans-serif;color:#b9bdc3}
.h{margin-left:80px;background:var(--panel);padding:10px 12px 0 10px;height:129px;position:relative;white-space:pre-line}.h:after{content:"";position:absolute;right:11px;bottom:5px;width:8px;height:40px;border-radius:4px;background:#9b9fa5}
.c{display:flex;align-items:center;height:50px;background:var(--panel);padding-right:19px;gap:18px}button.p{width:80px;gap:4px;margin-right:-8px;font-size:24px}
input{all:unset;flex:1;font-style:italic;font-size:23px}input::placeholder{color:#9a9fa8}i{border:6px solid transparent;border-top:9px solid #a3a7ad;border-bottom:0}`,
`<div class="h">Command: *Cancel*
Command: _vscurrent
Enter an option [2dwireframe/Wireframe/Hidden/Realistic/Conceptual/Shaded/shaded with Edges/shades of Gray/SKetchy/X-ray/Other] &lt;Realistic&gt;: _x</div>
<div class="c"><button class="p" aria-label="Recent commands">&gt;_<i></i></button><input aria-label="Command" placeholder="Type a command"><i></i><button aria-label="Share">${ic('share','style="--size:28px"')}</button></div>`);
def('cad-viewport',`:host{display:flex;flex-direction:column;justify-content:space-between;flex:1;min-width:0;background:var(--canvas);position:relative;padding-bottom:2px}
nav{position:relative;display:flex;align-items:center;gap:12px;height:44px;padding-left:30px;font:400 23px "DejaVu Sans",sans-serif;color:#a9a9a6}button{font:inherit}hr{margin:0;border:0;width:2px;height:26px;background:#96979a}button:first-child{margin-right:6px;font-size:20px}hr+button{margin-right:4px}command-line{position:relative}`,
`<solid-model></solid-model><nav><button>+</button><hr><button>Custom View</button><hr><button>X-Ray</button></nav><view-cube></view-cube><command-line></command-line>`);

def('cad-references',`:host{display:flex;flex-direction:column;width:472px;flex:none;background:var(--panel);border-bottom:2px solid var(--line)}
nav{display:flex;height:44px}nav button,nav span{flex:0 0 104px;border:solid var(--line);border-width:0 0 2px 2px;background:var(--tab)}nav .on{background:none;border-color:transparent;border-left:0}nav span{flex:1}nav .x{flex-basis:48px;background:none;color:var(--dim);font-size:24px}
header{display:flex;justify-content:space-between;align-items:center;padding:0 22px 2px 20px;height:36px;font:400 24px "Open Sans",sans-serif;color:#eee}
.b{display:flex;align-self:center;width:408px;height:48px;margin:12px 0 0;border:2px solid #26383c;border-radius:6px;overflow:hidden}.b button{flex:1;background:#4c5871;border-right:2px solid #3c4759;--size:30px}.b .d ui-icon{opacity:.45}.b button:last-child{background:#2f3441;border:0}
.s{flex:0 0 670px;border-bottom:2px solid var(--line);margin:0 4px 0 10px;display:flex;align-items:flex-end;justify-content:flex-end}.s i{width:242px;height:10px;border-radius:5px;background:#9ea2a8;margin:0 26px 9px 0}`,
`<nav><button class="on" aria-label="References">${ic('att')}</button><button aria-label="Sheets">${ic('tbl2','style="--size:28px"')}</button><span></span><button class="x" aria-label="Collapse">»</button></nav><header><span>Reference Manager</span><button aria-label="Undock">${ic('undock','style="--size:28px"')}</button></header>
<div class="b">${['atta','atte*','attc*','attd*','refr','tree*','pathf','info'].map(n=>`<button class="${n.includes('*')?'d':''}" aria-label="${n.replace('*','')}">${ic(n.replace('*',''))}</button>`).join('')}</div><div class="s"><i></i></div>`);

def('cad-status',`:host{display:flex;flex:none;height:46px;align-items:stretch;background:linear-gradient(#3b4453,#353c4b);font:400 23px "Liberation Sans",sans-serif;color:var(--dim);padding-right:12px;border-bottom:2px solid #262d38}
.t{border-right:2px solid var(--line);padding:0 24px;width:119px}.t.on{background:var(--active);color:#fff}.t.p{width:48px;padding:0}.c{margin-left:auto;border-left:2px solid var(--line);padding:0 8px 0 16px;display:flex;align-items:center;font:400 24px "Liberation Sans",sans-serif;color:#b9bbbf}
.i{display:flex;gap:4px;align-items:center}.i button{width:40px;height:40px}.i .on{background:#5b8cc0}.i .z{width:auto;gap:6px;font-size:22px;color:#b9bbbf}.z i{border:6px solid transparent;border-top:9px solid #ddd;border-bottom:0}.i button:last-child{color:#dcdcdc;margin-left:4px;width:36px}`,
`<button class="t on">Model</button><button class="t p" aria-label="New layout">${ic('plus')}</button><button class="t">a3rd</button><div class="c">-4.825, -5.151, 0.000</div><div class="i">${['gridm','snap','ortho','polar*','dyn','lw','transp*','cyc*','ang','ucs*','an1*','an2','an3'].map(n=>`<button class="${n.includes('*')?'on':''}" aria-label="${n.replace('*','')}">${ic(n.replace('*',''),'style="--size:30px"')}</button>`).join('')}<button class="z">1:1<i></i></button><button aria-label="Isolate">${ic('iso')}</button><button aria-label="Settings">${ic('gear')}</button></div>`);

const lg=(id,a,b)=>`<linearGradient id="${id}" x2="0" y2="1"><stop stop-color="${a}"/><stop offset="1" stop-color="${b}"/></linearGradient>`;
const bg=(a,b)=>`<defs>${lg('b',a,b)}<clipPath id="k"><rect width="80" height="80" rx="19"/></clipPath></defs><rect width="80" height="80" rx="19" fill="url(#b)"/>`;
const cl=i=>`<g clip-path="url(#k)">${i}</g>`;
const D={
finder:bg('#e9ebf3','#d5d9e6')+cl(f('M0 0H45Q36 28 34 47H46Q46 66 50 80H0Z','#1e9bfb')+f('M0 0H45Q41 12 39 24H0Z','#16b4fe')+f('M0 55H46Q47 68 50 80H0Z','#2574f0'))+s('M21 23V30M59 23V30','#1b2540',3)+s('M16 54Q40 74 64 54','#1b2540',3),
launchpad:bg('#c0c5d1','#a5acbb')+['#4fd24c','#fbb418','#fa8416','#d31f1f','#98a0ab','#fd3f5f','#8a3fd0','#1796f5','#31d0a0'].map((c,i)=>r(13+(i%3)*20,13+Math.floor(i/3)*20,15,15,c,N,0,4)).join(''),
safari:bg('#fff','#e2e2e2')+o(41,40,34,'#1c85ee',N,0)+`<circle cx="41" cy="40" r="30" fill="none" stroke="#d8ecff" stroke-width="4" stroke-dasharray="1 2.600"/>`+f('M64 19L45 45L37 35Z','#f2392f')+f('M18 60L37 35L45 45Z','#f0f0f4'),
messages:bg('#5fea66','#1cc62c')+`<ellipse cx="40" cy="38" rx="29" ry="25" fill="#eafbea"/>`+f('M22 54Q24 62 18 66Q28 66 34 60Z','#e0f5e0'),
mail:bg('#1f66ee','#19b4fd')+r(12,22,56,36,'#ececec',N,0,3)+s('M13 24L36 46Q40 49 44 46L67 24M13 57L33 42M67 57L47 42','#9b9b9b',1.5),
maps:bg('#54c95c','#54c95c')+cl(f('M0 10L80 75V80H60L0 30Z','#f2f4f5')+f('M0 32L40 60V80H0Z','#e88fc2')+f('M42 60L66 80H42Z','#fcc419')+r(18,0,27,80,'#f2f4f5')+r(22,0,18,60,'#2a6fe8')+s('M52-2Q54 28 82 26','#f2f4f5',12)+s('M52-2Q54 28 82 26','#c8ccd2',6))+o(31,50,20,'#fff',N,0)+o(31,50,17,'#2478ee',N,0)+f('M31 38L41 60L31 54L21 60Z','#fff'),
photos:bg('#fff','#fafafa')+['#fb9a22','#e3df1c','#a8cf4a','#6cb86a','#64a5dd','#7a7cc8','#c070b5','#f5645b'].map((c,i)=>`<rect x="31" y="5" width="19" height="33" rx="10" fill="${c}" fill-opacity=".85" transform="rotate(${i*45} 40.500 40)"/>`).join(''),
facetime:bg('#5fe765','#18c22a')+r(12,23,38,34,'#ecfaec',N,0,9)+f('M53 38L66 26Q68 25 68 28V52Q68 55 66 54L53 43Z','#e0f5e0'),
calendar:bg('#fff','#f4f4f2')+cl(r(0,0,80,25,'#ea4a45'))+t(41,19,15,'OUT.','#fff','font-family="Open Sans" font-weight="700"')+t(40,67,48,'10','#222','font-family="Inter" font-weight="300"'),
contacts:r(8,12,76,58,'#5fcf72',N,0,6)+r(8,12,76,44,'#f79a26',N,0,6)+r(8,12,76,30,'#5ac0e8',N,0,6)+bg('#b88b4e','#a0753a')+o(38,40,24,'#a87d42','#80602e',2)+o(38,34,9,'#8c6834',N,0)+f('M20 58Q24 47 38 47T56 58Q38 72 20 58Z','#8c6834'),
reminders:bg('#fff','#f6f6f4')+['#1877f2','#f2413b','#fa9a1c'].map((c,i)=>o(16,20+i*20,6,N,c,1)+o(16,20+i*20,4,c,N,0)+s(`M30 ${20+i*20}H71`,'#b0b0b0',1.5)).join(''),
notes:bg('#f7f6f2','#e4e2dc')+cl(r(0,0,80,20,'#fdc821')+s('M0 20H80','#b39a4a',1)+s('M0 40H80M0 60H80','#c8c6c0',1.5)+s('M2 24H80','#a9a7a0',1.5,'stroke-dasharray="1.500 2"')),
freeform:bg('#fff','#fff')+o(32,47,23,'#ff6b45',N,0)+r(27,11,43,42,'#34c3f2',N,0,6)+s('M16 50Q26 20 32 31T34 48Q44 22 49 34T52 46Q62 42 72 36','#0e3f63',5),
tv:bg('#26332c','#10151a')+g('translate(6 22) scale(1.050)',apple('#fff'))+t(52,53,36,'tv','#fff','font-family="Inter" font-weight="500"'),
music:bg('#fb5c6e','#fa2336')+f('M30 20L60 13V52A8 8 0 1 1 54 44V26L35 30V58A8 8 0 1 1 29 50Z','#fff'),
keynote:bg('#23a7fb','#1767f1')+f('M22 12H58L63 36H17Z','#f4f6f8')+r(17,32,46,4,'#d5dbe2')+o(40,20,7,'#f2b93b',N,0)+f('M40 13A7 7 0 0 1 40 27Z','#3fae5a')+f('M40 20L33 20A7 7 0 0 1 40 13Z','#7a4bc0')+r(38,36,4,29,'#dfe9f4')+r(27,65,26,4,'#e9f0f8',N,0,1),
numbers:bg('#6dec5c','#1ed01b')+r(14,52,10,16,'#f4fff2',N,0,2)+r(28,37,10,31,'#f4fff2',N,0,2)+r(42,12,10,56,'#f4fff2',N,0,2)+r(56,26,10,42,'#f4fff2',N,0,2),
pages:bg('#ffae2b','#fb7d13')+f('M13 67L17 54L58 16Q66 12 66 18Q66 22 26 60Z','#fff')+s('M38 36L43 42','#888',2)+s('M26 67H68','#ffd9a8',2),
appstore:bg('#1dbdfb','#1b68ee')+s('M44 15L24 49M36 15L58 56M14 50H44M52 50H66M20 57L17 62','#fff',7,'stroke-linecap="round"'),
settings:bg('#c6ccd0','#8c8a83')+o(40,40,34,'#55585a',N,0)+`<circle cx="40" cy="40" r="32" fill="none" stroke="#222" stroke-width="5" stroke-dasharray="2 2"/>`+o(40,40,26,'#777','#2a2a2a',3)+o(40,40,20,'#4a4a4a','#999',3)+s('M40 40H63M40 40L28 20M40 40L28 60','#a5a5a5',4)+o(40,40,5,'#888','#333',2),
autocad:bg('#fff','#fff')+f('M10 16L18 8V48L10 57Z','#f56b93')+r(66,18,4,54,'#6b0720')+r(18,8,47,46,'#e6145a')+f('M14 72V58L18 53H68V72Z','#7a0a2b')+t(41,43,36,'A','#fff','font-weight="700" font-family="Inter"')+t(42,68,14,'CAD','#fff','font-weight="700" font-family="Inter"'),
word:bg('#fff','#fff')+r(21,13,45,53,'#1b5cbe',N,0,3)+r(21,13,45,14,'#41a0ec')+r(21,26,45,14,'#2b7cd8')+r(21,53,45,13,'#123e8c')+r(7,25,30,30,'#1a56b8',N,0,3)+t(22,48,21,'W','#fff','font-weight="700" font-family="Open Sans"'),
whatsapp:bg('#5dea64','#1bc22b')+f('M11 70L15 54A30 30 0 1 1 26 65Z','#fff')+f('M17 64L20 54A25 25 0 1 1 27 60Z','#2fd03d')+f('M28 26Q32 22 34 27L37 33Q36 37 34 38Q38 46 46 50L49 46Q51 45 57 49Q58 57 48 58Q28 56 26 34Z','#fff'),
ppt:bg('#fff','#fff')+o(42,40,27,'#d35230',N,0)+f('M42 13A27 27 0 0 1 69 40H42Z','#ffab8e')+f('M42 13A27 27 0 0 0 15 40H42Z','#f2714f')+r(10,25,30,30,'#c43e1c',N,0,3)+t(25,48,21,'P','#fff','font-weight="700" font-family="Open Sans"'),
chrome:bg('#fff','#e8e8e8')+o(41,40,34,'#fbc11c',N,0)+f('M12 22A34 34 0 0 1 70 23H41L26 48Z','#dc3a2d')+f('M12 22A34 34 0 0 0 38 74L56 48H27Z','#35a04c')+o(41,40,15,'#2f7de8','#fff',4),
trash:`<defs><linearGradient id="b"><stop stop-color="#55595c"/><stop offset=".4" stop-color="#a4a7a9"/><stop offset="1" stop-color="#5e6264"/></linearGradient></defs>`+f('M6 5L72 5L63 78Q39 86 15 78Z','url(#b)')+`<ellipse cx="39" cy="6" rx="34" ry="9" fill="#8b8e90"/>`+f('M10 6L22-5L32-2L42-8L50-4L60-6L68 5L58 12L40 10L22 12Z','#e8e9ea')+f('M28 0L36 2L32 9ZM50 0L57 6L48 8Z','#335f8c')+o(40,4,3,'#4db35f',N,0)+s('M18 4L28 10M60-2L52 12M40-4L44 10','#8a8d90',1.5)
};
def('dock-app',`:host{display:flex;flex:1 1 0;flex-direction:column;align-items:center}svg{width:80px;height:80px;filter:drop-shadow(0 1px 1px #0005)}i{width:8px;height:8px;border-radius:50%;background:#b9c3ea;margin-top:17px}`,
e=>`<button aria-label="${e.getAttribute('app')}"><svg viewBox="0 0 80 80">${D[e.getAttribute('app')]}</svg></button>${e.hasAttribute('running')?'<i></i>':''}`);
const apps='finder* launchpad safari messages* mail* maps photos facetime calendar contacts reminders notes* freeform tv music keynote numbers pages appstore settings autocad* | word* whatsapp* ppt* chrome* | trash'.split(' ');
def('mac-dock',`:host{display:flex;flex:none;height:128px;margin:0 89px 10px 90px;padding:17px 2px 0;border:2px solid #56628a;border-radius:44px;background:linear-gradient(90deg,#2b4061 0,#2d4060 16%,#424a72 31%,#2e4062 38%,#3c466c 50%,#293e58 55%,#20323e 62%,#2f3d58 66%,#4b4d76 71%,#414b72 76%,#2a3b5c 80%,#2b3c5d 88%,#323f62 100%)}
hr{flex:0 0 48px;border:0;height:96px;margin:-4px 0 0;background:linear-gradient(#6e7b9c,#6e7b9c) center/2px 100% no-repeat}`,
apps.map(a=>a==='|'?'<hr>':`<dock-app app="${a.replace('*','')}" ${a.includes('*')?'running':''}></dock-app>`).join(''));
</script>
</body>
</html>
